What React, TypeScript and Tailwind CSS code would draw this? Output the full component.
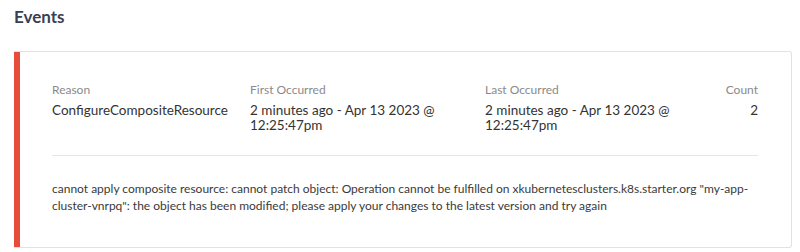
import React from "react";

export default function App() {
  const font = { fontFamily: "Lato, 'Noto Sans', sans-serif" };
  return (
    <div className="w-[800px] h-[252px] bg-white px-[14px] pt-[6px]" style={font}>
      <h2 className="text-[17px] font-bold leading-[22px] text-[#3a3f55]">Events</h2>
      <div className="mt-[23px] flex border border-[#e2e2e2] border-l-0 rounded-r-[3px] w-[778px]">
        <div className="w-[6px] bg-[#e64b3c] shrink-0" />
        <div className="flex-1 pl-[32px] pr-[33px] pt-[30px] pb-[33px]">
          <div className="grid grid-cols-[198px_235px_1fr_auto] pb-[22px] border-b border-[#e6e6e6]">
            <div>
              <div className="text-[12px] leading-[16px] text-[#8a8a8a]">Reason</div>
              <div className="mt-[5px] text-[13.5px] leading-[15px] text-[#333]">ConfigureCompositeResource</div>
            </div>
            <div>
              <div className="text-[12px] leading-[16px] text-[#8a8a8a]">First Occurred</div>
              <div className="mt-[5px] text-[13.5px] leading-[15px] text-[#333] w-[205px]">2 minutes ago - Apr 13 2023 @ 12:25:47pm</div>
            </div>
            <div>
              <div className="text-[12px] leading-[16px] text-[#8a8a8a]">Last Occurred</div>
              <div className="mt-[5px] text-[13.5px] leading-[15px] text-[#333] w-[205px]">2 minutes ago - Apr 13 2023 @ 12:25:47pm</div>
            </div>
            <div className="text-right">
              <div className="text-[12px] leading-[16px] text-[#8a8a8a]">Count</div>
              <div className="mt-[5px] text-[13.5px] leading-[15px] text-[#333]">2</div>
            </div>
          </div>
          <p className="mt-[24px] text-[12px] leading-[17px] text-[#3a3a3a]">
            cannot apply composite resource: cannot patch object: Operation cannot be fulfilled on xkubernetesclusters.k8s.starter.org "my-app-cluster-vnrpq": the object has been modified; please apply your changes to the latest version and try again
          </p>
        </div>
      </div>
    </div>
  );
}
